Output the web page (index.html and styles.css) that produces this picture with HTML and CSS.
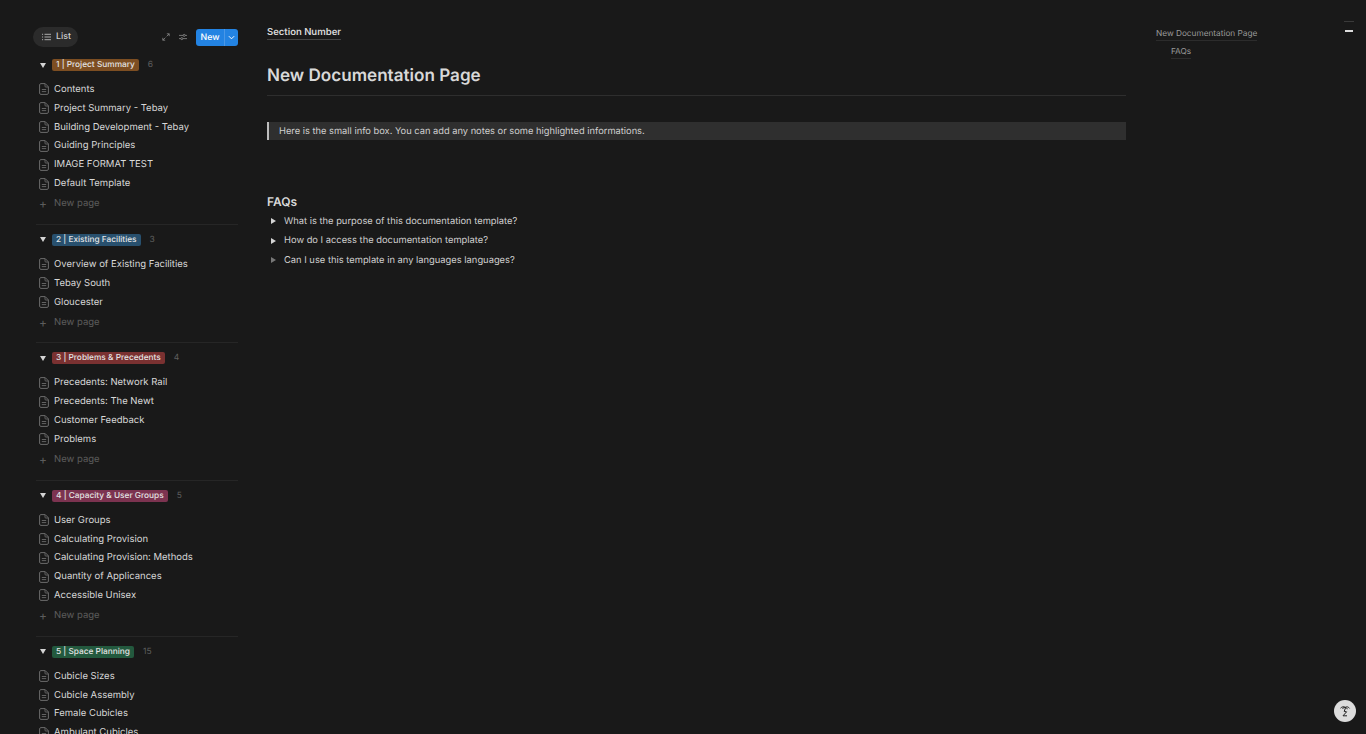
FILE: index.html
```html
<!DOCTYPE html>
<html lang="en">
<head>
<meta charset="utf-8">
<title>New Documentation Page</title>
<link rel="stylesheet" href="styles.css">
</head>
<body>
<svg class="defs" width="0" height="0" aria-hidden="true">
  <symbol id="doc" viewBox="0 0 10 12">
    <path d="M1.900.6h4.300L9.400 3.800v6.300c0 .7-.5 1.300-1.300 1.300H1.900c-.8 0-1.300-.6-1.300-1.300V1.900C.6 1.200 1.100.6 1.900.6z" fill="none" stroke="currentColor" stroke-width="1"/>
    <path d="M6 .8v2.400c0 .5.3.8.8.8h2.400M2.800 6.500h4.400M2.800 8.600h4.400" fill="none" stroke="currentColor" stroke-width=".9"/>
  </symbol>
</svg>
<div class="app">
  <aside class="sidebar">
    <div class="toolbar">
      <div class="view-tab">
        <svg class="list-icon" viewBox="0 0 10 8"><path d="M0 1h1.200M0 4h1.200M0 7h1.200M2.800 1H10M2.800 4H10M2.800 7H10" stroke="currentColor" stroke-width="1" fill="none"/></svg>
        <span>List</span>
      </div>
      <div class="tools">
        <svg class="tool-icon" viewBox="0 0 10 10"><path d="M6 1h3v3M9 1 5.800 4.200M4 9H1V6M1 9l3.200-3.200" stroke="currentColor" stroke-width="1" fill="none"/></svg>
        <svg class="tool-icon" viewBox="0 0 10 10"><path d="M0 3h10M0 7h10" stroke="currentColor" stroke-width="1" fill="none"/><circle cx="6.500" cy="3" r="1.300" fill="#191919" stroke="currentColor"/><circle cx="3.500" cy="7" r="1.300" fill="#191919" stroke="currentColor"/></svg>
        <div class="new-btn">
          <span class="new-label">New</span>
          <span class="new-caret"><svg viewBox="0 0 8 5"><path d="M1 1l3 3 3-3" stroke="currentColor" stroke-width="1.100" fill="none"/></svg></span>
        </div>
      </div>
    </div>

    <section class="group">
      <header class="group-head"><i class="tri-down"></i><span class="tag tag-brown">1 | Project Summary</span><span class="count">6</span></header>
      <ul class="pages">
        <li><svg class="doc"><use href="#doc"/></svg>Contents</li>
        <li><svg class="doc"><use href="#doc"/></svg>Project Summary - Tebay</li>
        <li><svg class="doc"><use href="#doc"/></svg>Building Development - Tebay</li>
        <li><svg class="doc"><use href="#doc"/></svg>Guiding Principles</li>
        <li><svg class="doc"><use href="#doc"/></svg>IMAGE FORMAT TEST</li>
        <li><svg class="doc"><use href="#doc"/></svg>Default Template</li>
      </ul>
      <div class="new-page"><span class="plus">+</span>New page</div>
    </section>

    <section class="group">
      <header class="group-head"><i class="tri-down"></i><span class="tag tag-blue">2 | Existing Facilities</span><span class="count">3</span></header>
      <ul class="pages">
        <li><svg class="doc"><use href="#doc"/></svg>Overview of Existing Facilities</li>
        <li><svg class="doc"><use href="#doc"/></svg>Tebay South</li>
        <li><svg class="doc"><use href="#doc"/></svg>Gloucester</li>
      </ul>
      <div class="new-page"><span class="plus">+</span>New page</div>
    </section>

    <section class="group">
      <header class="group-head"><i class="tri-down"></i><span class="tag tag-red">3 | Problems &amp; Precedents</span><span class="count">4</span></header>
      <ul class="pages">
        <li><svg class="doc"><use href="#doc"/></svg>Precedents: Network Rail</li>
        <li><svg class="doc"><use href="#doc"/></svg>Precedents: The Newt</li>
        <li><svg class="doc"><use href="#doc"/></svg>Customer Feedback</li>
        <li><svg class="doc"><use href="#doc"/></svg>Problems</li>
      </ul>
      <div class="new-page"><span class="plus">+</span>New page</div>
    </section>

    <section class="group">
      <header class="group-head"><i class="tri-down"></i><span class="tag tag-pink">4 | Capacity &amp; User Groups</span><span class="count">5</span></header>
      <ul class="pages">
        <li><svg class="doc"><use href="#doc"/></svg>User Groups</li>
        <li><svg class="doc"><use href="#doc"/></svg>Calculating Provision</li>
        <li><svg class="doc"><use href="#doc"/></svg>Calculating Provision: Methods</li>
        <li><svg class="doc"><use href="#doc"/></svg>Quantity of Applicances</li>
        <li><svg class="doc"><use href="#doc"/></svg>Accessible Unisex</li>
      </ul>
      <div class="new-page"><span class="plus">+</span>New page</div>
    </section>

    <section class="group">
      <header class="group-head"><i class="tri-down"></i><span class="tag tag-green">5 | Space Planning</span><span class="count">15</span></header>
      <ul class="pages">
        <li><svg class="doc"><use href="#doc"/></svg>Cubicle Sizes</li>
        <li><svg class="doc"><use href="#doc"/></svg>Cubicle Assembly</li>
        <li><svg class="doc"><use href="#doc"/></svg>Female Cubicles</li>
        <li><svg class="doc"><use href="#doc"/></svg>Ambulant Cubicles</li>
      </ul>
    </section>
  </aside>

  <main class="doc-main">
    <a class="crumb">Section Number</a>
    <h1 class="title">New Documentation Page</h1>
    <div class="callout">Here is the small info box. You can add any notes or some highlighted informations.</div>
    <h2 class="heading">FAQs</h2>
    <div class="toggle"><i class="tri-right"></i>What is the purpose of this documentation template?</div>
    <div class="toggle"><i class="tri-right"></i>How do I access the documentation template?</div>
    <div class="toggle"><i class="tri-right tri-dim"></i>Can I use this template in any languages languages?</div>
  </main>

  <nav class="toc">
    <a class="toc-link">New Documentation Page</a>
    <a class="toc-link toc-sub">FAQs</a>
  </nav>

  <div class="scroll-marks"><span class="mark-dim"></span><span class="mark-on"></span></div>
</div>
<button class="help" aria-label="Help">
  <svg viewBox="0 0 14 14"><path d="M2.500 4.200C4 2.600 6 2.400 7.200 3.400 8.600 2.400 10.500 2.700 11.500 4.400M7.200 3.400C5.900 3.300 5 3.900 4.500 5M7.200 3.400C8.300 3.500 9 4.200 9.300 5.200M7.600 3.600 6.200 7.400 8.600 7.800 5 11.800H9" fill="none" stroke="#222" stroke-width="1"/></svg>
</button>
</body>
</html>
```
FILE: styles.css
```css
* { box-sizing: border-box; }
html, body { margin: 0; height: 100%; overflow: hidden; }
body {
  background: #191919;
  color: #d8d8d8;
  font-family: Inter, "Liberation Sans", sans-serif;
  font-size: 9.5px;
  text-rendering: geometricPrecision;
}
.defs { position: absolute; }
.app { display: flex; height: 734px; overflow: hidden; position: relative; }

.sidebar { width: 202px; margin-left: 36px; flex: none; padding-top: 26px; }
.toolbar { display: flex; justify-content: space-between; align-items: center; height: 21px; margin-bottom: 9px; }
.view-tab {
  display: flex; align-items: center; gap: 5px;
  width: 45px; height: 20px; margin-left: -3px; padding-left: 9px;
  border-radius: 10px; background: #2b2b2b; font-size: 8.8px; font-weight: 500; color: #cfcfcf;
}
.list-icon { width: 9px; height: 8px; color: #bbb; }
.tools { display: flex; align-items: center; }
.tool-icon { width: 8px; height: 8px; color: #8a8a8a; margin-right: 9px; }
.new-btn {
  display: flex; width: 42px; height: 17px; margin-top: 1px;
  border-radius: 3px; background: #2383e2; color: #fff; overflow: hidden;
}
.new-label { flex: 1; text-align: center; font-size: 8.8px; font-weight: 500; line-height: 17px; }
.new-caret { width: 14px; display: flex; align-items: center; justify-content: center; border-left: 1px solid #4a97e6; }
.new-caret svg { width: 7px; height: 5px; }

.group { padding-bottom: 10px; border-bottom: 1px solid #262626; }
.group:last-child { border-bottom: 0; }
.group-head { display: flex; align-items: center; height: 18px; margin-top: 6px; padding-left: 4px; }
.group:first-of-type .group-head { margin-top: 5px; }
.tri-down { width: 0; height: 0; border: 3px solid transparent; border-top: 5px solid #d4d4d4; border-bottom: 0; margin-right: 6px; }
.tag { height: 12px; line-height: 12px; padding: 0 4px; border-radius: 2px; font-size: 8.3px; font-weight: 500; color: #e3e3e3; white-space: nowrap; }
.tag-brown { background: #7d4e22; }
.tag-blue { background: #28506e; }
.tag-red { background: #7a3131; }
.tag-pink { background: #7c3350; }
.tag-green { background: #23593e; }
.count { margin-left: 9px; font-size: 8.5px; color: #5f5f5f; }

.pages { list-style: none; margin: 6px 0 0; padding: 0; }
.pages li { display: flex; align-items: center; height: 18.84px; color: #d8d8d8; white-space: nowrap; }
.doc { width: 10px; height: 12px; margin: 0 5px 0 3px; color: #6c6c6c; flex: none; }
.new-page { display: flex; align-items: center; height: 21px; padding-top: 1px; color: #5c5c5c; }
.plus { width: 18px; padding-left: 3px; font-size: 12px; color: #5c5c5c; }

.doc-main { width: 859px; margin-left: 29px; flex: none; padding-top: 26px; font-size: 9.35px; }
.crumb { display: inline-block; font-size: 9.5px; font-weight: 600; color: #d8d8d8; border-bottom: 1px solid #444; line-height: 13px; }
.title { margin: 23px 0 0; padding-bottom: 6px; font-size: 17.1px; font-weight: 600; line-height: 26px; color: #d8d8d8; border-bottom: 1px solid #2e2e2e; }
.callout { margin-top: 26px; height: 18px; line-height: 19px; padding-left: 10px; background: #2f2f2f; border-left: 2px solid #bdbdbd; color: #d0d0d0; font-size: 9.3px; }
.heading { margin: 50.5px 0 0; font-size: 12px; line-height: 21px; font-weight: 600; color: #d8d8d8; }
.toggle { display: flex; align-items: center; height: 19.5px; padding-left: 4px; color: #d0d0d0; white-space: nowrap; }
.tri-right { width: 0; height: 0; border: 3px solid transparent; border-left: 5px solid #d4d4d4; border-right: 0; margin-right: 8px; }
.tri-dim { border-left-color: #777; }

.toc { margin-left: 30px; padding-top: 27px; display: flex; flex-direction: column; align-items: flex-start; gap: 4px; }
.toc-link { font-size: 8.25px; line-height: 13px; color: #9a9a9a; border-bottom: 1px solid #2c2c2c; }
.toc-sub { margin-left: 15px; }
.scroll-marks { position: absolute; top: 21px; right: 12px; display: flex; flex-direction: column; gap: 8px; align-items: flex-end; }
.mark-dim { width: 10px; height: 1px; background: #3a3a3a; }
.mark-on { width: 8px; height: 2px; background: #ddd; margin-right: 1px; }
.help {
  position: absolute; left: 1334px; top: 700px; width: 22px; height: 22px; padding: 4px;
  border: 0; border-radius: 50%; background: #dcdcdc;
}
.help svg { width: 14px; height: 14px; display: block; }
```
